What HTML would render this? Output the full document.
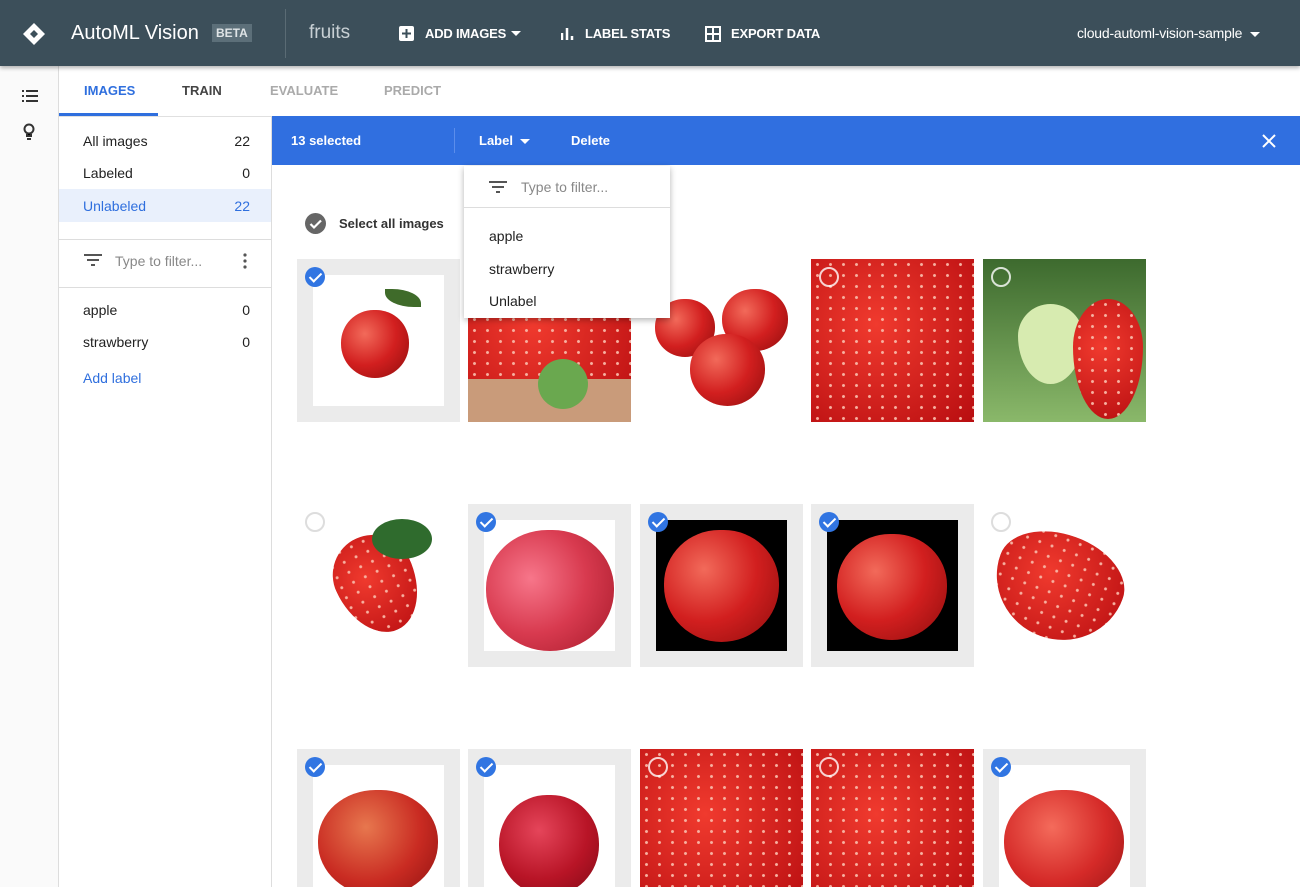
<!DOCTYPE html>
<html><head><meta charset="utf-8"><style>
*{box-sizing:border-box;margin:0;padding:0}
html,body{width:1300px;height:887px;overflow:hidden}
body{font-family:"Liberation Sans",Arial,sans-serif;background:#fff;position:relative;font-size:14px;color:#212121}
.hdr{position:absolute;left:0;top:0;width:1300px;height:66px;background:#3c4f5a;color:#fff;box-shadow:0 2px 4px rgba(0,0,0,.3);z-index:5}
.hdr .t{position:absolute;top:22px;font-size:20px}
.hdr .b{position:absolute;top:26px;font-size:13px;font-weight:bold;letter-spacing:-.2px}
.abs{position:absolute}
.rail{position:absolute;left:0;top:66px;width:59px;height:821px;background:#fafafa;border-right:1px solid #ddd}
.tabs span{position:absolute;top:83px;font-size:13px;font-weight:bold}
.side{position:absolute;left:59px;top:116px;width:213px;height:771px;border-right:1px solid #ddd;border-top:1px solid #e0e0e0}
.row{position:absolute;left:0;width:212px;height:33px;padding:0 21px 0 24px;display:flex;justify-content:space-between;align-items:center;font-size:14px}
.bar{position:absolute;left:272px;top:116px;width:1028px;height:49px;background:#306fe0;color:#fff;font-weight:bold;font-size:13px}
.tile{position:absolute;width:163px;height:163px;background:#ebebeb;overflow:hidden}
.tile .in{position:absolute;left:16px;top:16px;width:131px;height:131px;overflow:hidden}
.full{position:absolute;inset:0}
.chk{position:absolute;left:8px;top:8px;width:20px;height:20px;border-radius:50%;background:#3175e2;z-index:3}
.chk:after{content:"";position:absolute;left:7px;top:3px;width:5px;height:10px;border:solid #fff;border-width:0 2px 2px 0;transform:rotate(45deg)}
.unc{position:absolute;left:8px;top:8px;width:20px;height:20px;border-radius:50%;border:2px solid rgba(255,255,255,.8);z-index:3}
.apple{position:absolute;border-radius:48% 48% 50% 50%;background:radial-gradient(circle at 35% 35%,#f26a5a,#d21f1f 50%,#8e0d0d)}
.sb{background:radial-gradient(circle,#f7b0a0 1.2px,transparent 1.8px) 0 0/13px 11px,radial-gradient(circle at 40% 40%,#f03a2e,#b80d10)}
.straw{position:absolute;border-radius:50% 50% 50% 50%/40% 40% 60% 60%}
.dd{position:absolute;left:464px;top:166px;width:206px;height:152px;background:#fff;box-shadow:0 2px 6px rgba(0,0,0,.3);z-index:10}
</style></head><body>
<div class="hdr">
<svg class="abs" style="left:21px;top:21px" width="26" height="26" viewBox="0 0 26 26"><path d="M13 2 L24 13 L13 24 L2 13Z" fill="#fff"/><path d="M13 9 L17 13 L13 17 L9 13Z" fill="#3c4f5a"/></svg>
<span class="t" style="left:71px">AutoML Vision</span>
<span class="abs" style="left:212px;top:24px;background:#5c6f79;padding:2px 4px;font-size:12px;font-weight:bold;color:#dfe4e6">BETA</span>
<div class="abs" style="left:285px;top:9px;width:1px;height:49px;background:#5a6b74"></div>
<span class="t" style="left:309px;color:#c8d0d4;font-size:19px">fruits</span>
<svg class="abs" style="left:399px;top:26px" width="15" height="15"><rect width="15" height="15" rx="2" fill="#fff"/><path d="M7.5 3v9M3 7.5h9" stroke="#3c4f5a" stroke-width="2"/></svg>
<span class="b" style="left:425px">ADD IMAGES</span>
<svg class="abs" style="left:511px;top:31px" width="10" height="6"><path d="M0 0h10L5 5z" fill="#fff"/></svg>
<svg class="abs" style="left:561px;top:27px" width="14" height="13"><path d="M1 6v7M6 1v12M11 9v4" stroke="#fff" stroke-width="2.5"/></svg>
<span class="b" style="left:585px">LABEL STATS</span>
<svg class="abs" style="left:705px;top:26px" width="16" height="16"><rect x="1" y="1" width="14" height="14" fill="none" stroke="#fff" stroke-width="2"/><path d="M8 1v14M1 8h14" stroke="#fff" stroke-width="2"/></svg>
<span class="b" style="left:731px">EXPORT DATA</span>
<span class="abs" style="left:1077px;top:25px;font-size:14px;letter-spacing:-.2px">cloud-automl-vision-sample</span>
<svg class="abs" style="left:1250px;top:32px" width="10" height="6"><path d="M0 0h10L5 5z" fill="#fff"/></svg>
</div>
<div class="rail">
<svg class="abs" style="left:22px;top:24px" width="16" height="12"><path d="M0 1h2M4 1h12M0 6h2M4 6h12M0 11h2M4 11h12" stroke="#333" stroke-width="2"/></svg>
<svg class="abs" style="left:23px;top:57px" width="12" height="18"><circle cx="6" cy="6" r="4.5" fill="none" stroke="#333" stroke-width="2"/><path d="M4 11v2h4v-2M4 16h4" stroke="#333" stroke-width="2"/></svg>
</div>
<div class="tabs">
<span style="left:84px;color:#2f6fde">IMAGES</span>
<span style="left:182px;color:#444">TRAIN</span>
<span style="left:270px;color:#aaa">EVALUATE</span>
<span style="left:384px;color:#aaa">PREDICT</span>
</div>
<div class="abs" style="left:59px;top:113px;width:99px;height:3px;background:#2f6fde"></div>
<div class="side">
<div class="row" style="top:7px"><span>All images</span><span>22</span></div>
<div class="row" style="top:39px"><span>Labeled</span><span>0</span></div>
<div class="row" style="top:72px;background:#e9f0fc;color:#2f6fde"><span>Unlabeled</span><span>22</span></div>
<div class="abs" style="left:0;top:122px;width:212px;height:1px;background:#ddd"></div>
<svg class="abs" style="left:25px;top:137px" width="18" height="12"><path d="M0 1h18M3 6h12M7 11h4" stroke="#555" stroke-width="2"/></svg>
<span class="abs" style="left:56px;top:136px;color:#888">Type to filter...</span>
<svg class="abs" style="left:184px;top:136px" width="4" height="16"><circle cx="2" cy="2" r="1.6" fill="#555"/><circle cx="2" cy="8" r="1.6" fill="#555"/><circle cx="2" cy="14" r="1.6" fill="#555"/></svg>
<div class="abs" style="left:0;top:170px;width:212px;height:1px;background:#ddd"></div>
<div class="row" style="top:176px"><span>apple</span><span>0</span></div>
<div class="row" style="top:208px"><span>strawberry</span><span>0</span></div>
<span class="abs" style="left:24px;top:253px;color:#2f6fde">Add label</span>
</div>
<div class="bar">
<span class="abs" style="left:19px;top:17px">13 selected</span>
<div class="abs" style="left:182px;top:12px;width:1px;height:25px;background:#5b8deb"></div>
<span class="abs" style="left:207px;top:17px">Label</span>
<svg class="abs" style="left:248px;top:23px" width="10" height="6"><path d="M0 0h10L5 5z" fill="#fff"/></svg>
<span class="abs" style="left:299px;top:17px">Delete</span>
<svg class="abs" style="left:990px;top:18px" width="14" height="14"><path d="M1 1l12 12M13 1L1 13" stroke="#fff" stroke-width="2"/></svg>
</div>
<div class="dd">
<svg class="abs" style="left:25px;top:15px" width="18" height="12"><path d="M0 1h18M3 6h12M7 11h4" stroke="#555" stroke-width="2"/></svg>
<span class="abs" style="left:57px;top:13px;color:#888">Type to filter...</span>
<div class="abs" style="left:0;top:41px;width:206px;height:1px;background:#ddd"></div>
<span class="abs" style="left:25px;top:62px">apple</span>
<span class="abs" style="left:25px;top:95px">strawberry</span>
<span class="abs" style="left:25px;top:127px">Unlabel</span>
</div>
<svg class="abs" style="left:305px;top:213px" width="21" height="21"><circle cx="10.5" cy="10.5" r="10.5" fill="#666"/><path d="M5.5 11l3.5 3.5 7-7" stroke="#fff" stroke-width="2.2" fill="none"/></svg>
<span class="abs" style="left:339px;top:216px;font-weight:bold;font-size:13px;color:#333">Select all images</span>

<div class="tile" style="left:297px;top:259px"><div class="chk"></div><div class="in" style="background:#fff"><div class="apple" style="left:28px;top:35px;width:68px;height:68px"></div><div class="abs" style="left:72px;top:14px;width:36px;height:18px;background:#3f6b2a;border-radius:0 80% 0 80%"></div></div></div>
<div class="tile" style="left:468px;top:259px"><div class="full sb"></div><div class="abs" style="left:0;top:120px;width:163px;height:43px;background:#c99b7a"></div><div class="abs" style="left:70px;top:100px;width:50px;height:50px;border-radius:50%;background:#6aa84f"></div></div>
<div class="tile" style="left:640px;top:259px"><div class="full" style="background:#fff"></div><div class="apple" style="left:15px;top:40px;width:60px;height:58px"></div><div class="apple" style="left:82px;top:30px;width:66px;height:62px"></div><div class="apple" style="left:50px;top:75px;width:75px;height:72px"></div></div>
<div class="tile" style="left:811px;top:259px"><div class="full sb"></div><div class="unc"></div></div>
<div class="tile" style="left:983px;top:259px"><div class="full" style="background:linear-gradient(#3d6a2e,#8ab86a)"></div><div class="straw" style="left:35px;top:45px;width:65px;height:80px;background:#d7ebb0"></div><div class="straw sb" style="left:90px;top:40px;width:70px;height:120px"></div><div class="unc"></div></div>

<div class="tile" style="left:297px;top:504px;background:#fff"><div class="straw sb" style="left:40px;top:30px;width:80px;height:100px;transform:rotate(-25deg)"></div><div class="abs" style="left:75px;top:15px;width:60px;height:40px;background:#2f6b2d;border-radius:50%"></div><div class="unc" style="border-color:#ddd"></div></div>
<div class="tile" style="left:468px;top:504px"><div class="chk"></div><div class="in" style="background:#fff"><div class="apple" style="left:2px;top:10px;width:128px;height:121px;background:radial-gradient(circle at 35% 40%,#f7768a,#d83a4f 50%,#a61a2a)"></div></div></div>
<div class="tile" style="left:640px;top:504px"><div class="chk"></div><div class="in" style="background:#000"><div class="apple" style="left:8px;top:10px;width:115px;height:112px"></div></div></div>
<div class="tile" style="left:811px;top:504px"><div class="chk"></div><div class="in" style="background:#000"><div class="apple" style="left:10px;top:14px;width:110px;height:106px"></div></div></div>
<div class="tile" style="left:983px;top:504px;background:#fff"><div class="straw sb" style="left:10px;top:30px;width:130px;height:105px;transform:rotate(20deg)"></div><div class="unc" style="border-color:#ddd"></div></div>

<div class="tile" style="left:297px;top:749px"><div class="chk"></div><div class="in" style="background:#fff"><div class="apple" style="left:5px;top:25px;width:120px;height:106px;background:radial-gradient(circle at 40% 35%,#e7774e,#c92b22 55%,#8e1111)"></div></div></div>
<div class="tile" style="left:468px;top:749px"><div class="chk"></div><div class="in" style="background:#fff"><div class="apple" style="left:15px;top:30px;width:100px;height:101px;background:radial-gradient(circle at 40% 35%,#e5455a,#b81426 55%,#7e0a16)"></div></div></div>
<div class="tile" style="left:640px;top:749px"><div class="full sb"></div><div class="unc"></div></div>
<div class="tile" style="left:811px;top:749px"><div class="full sb"></div><div class="unc"></div></div>
<div class="tile" style="left:983px;top:749px"><div class="chk"></div><div class="in" style="background:#fff"><div class="apple" style="left:5px;top:25px;width:120px;height:106px;background:radial-gradient(circle at 40% 35%,#f46b5b,#d52a28 55%,#9a1515)"></div></div></div>
</body></html>
